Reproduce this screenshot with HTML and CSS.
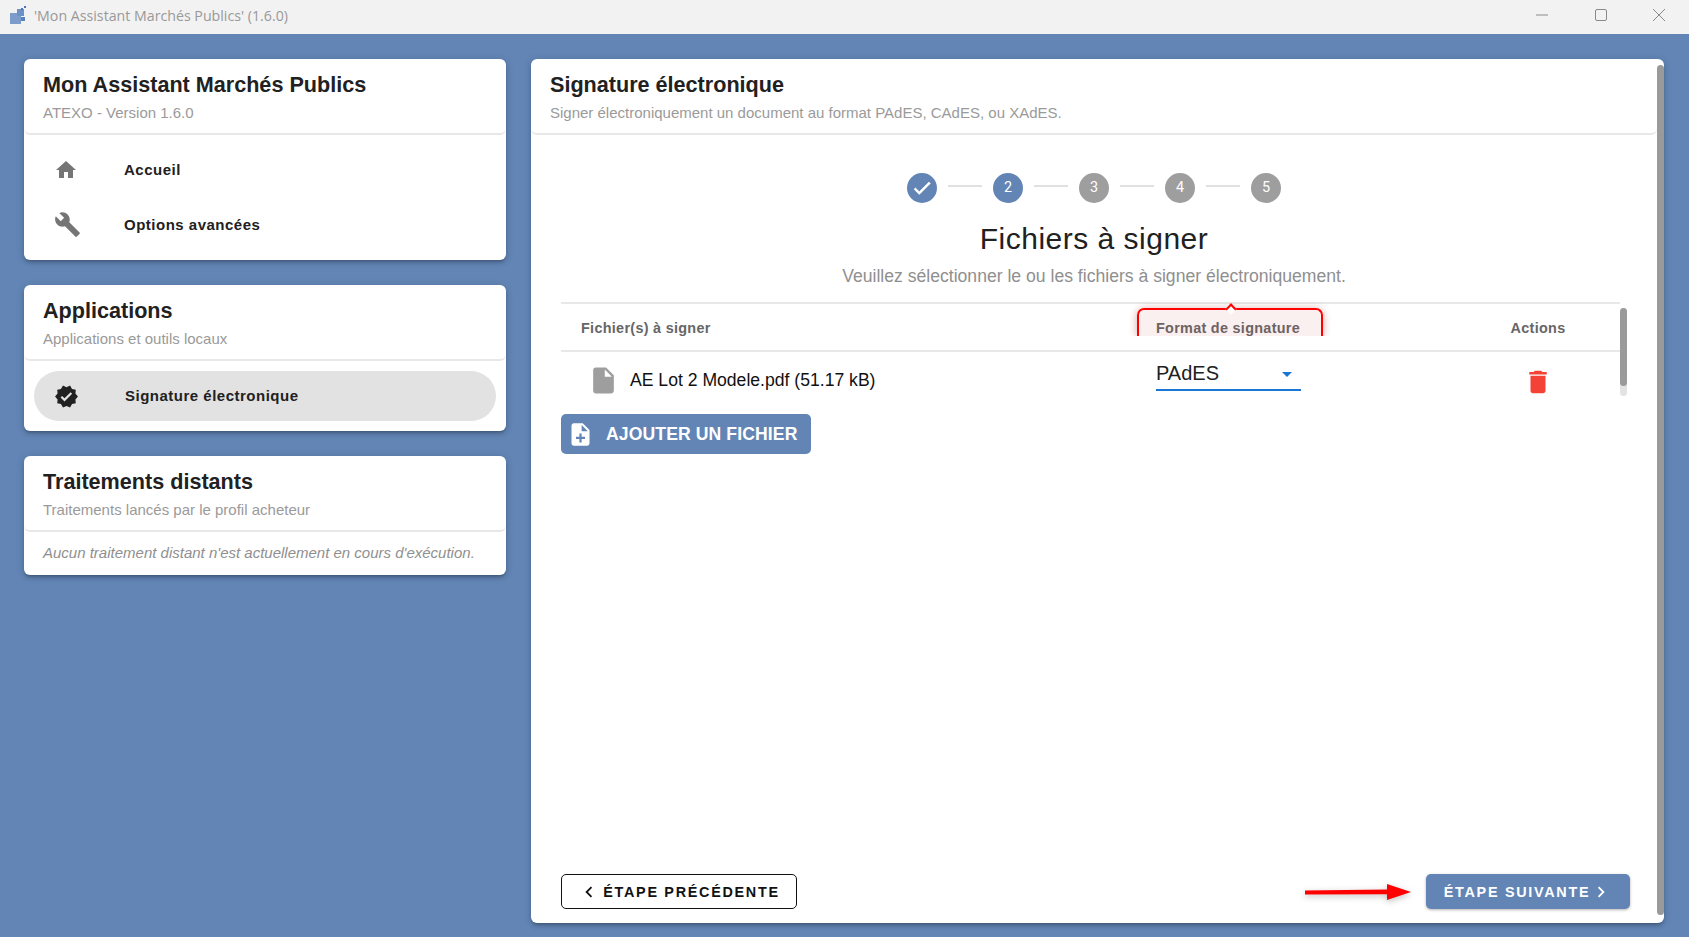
FILE: index.html
```html
<!DOCTYPE html>
<html lang="fr">
<head>
<meta charset="utf-8">
<title>Mon Assistant Marchés Publics</title>
<link rel="stylesheet" href="styles.css">
</head>
<body>
<div class="app">
  <header class="titlebar">
    <svg class="app-logo" viewBox="0 0 17 18"><rect x="0" y="7" width="11" height="11" fill="#7c9cca"/><rect x="7" y="3" width="7" height="7" fill="#6c91c6"/><rect x="11" y="11" width="4" height="4" fill="#5a82bd"/><rect x="11" y="2" width="2" height="2" fill="#4a74b5"/><rect x="14" y="0" width="2" height="2" fill="#4a74b5"/></svg>
    <span class="titlebar-text">'Mon Assistant Marchés Publics' (1.6.0)</span>
    <div class="win-controls">
      <svg class="win-btn" viewBox="0 0 14 14"><path d="M1 7h12" stroke="#8a8a8a" fill="none"/></svg>
      <svg class="win-btn" viewBox="0 0 14 14"><rect x="1.5" y="1.5" width="11" height="11" rx="1.5" stroke="#8a8a8a" fill="none"/></svg>
      <svg class="win-btn" viewBox="0 0 14 14"><path d="M1 1l12 12M13 1L1 13" stroke="#8a8a8a" fill="none"/></svg>
    </div>
  </header>
  <div class="workspace">
    <aside class="sidebar">
      <section class="card">
        <div class="card-head">
          <h2 class="card-title">Mon Assistant Marchés Publics</h2>
          <p class="card-sub">ATEXO - Version 1.6.0</p>
        </div>
        <nav class="nav">
          <a class="nav-item"><span class="nav-icon"><svg class="i24 grey" viewBox="0 0 24 24"><path d="M10 20v-6h4v6h5v-8h3L12 3 2 12h3v8z"/></svg></span><span class="nav-label">Accueil</span></a>
          <a class="nav-item"><span class="nav-icon"><svg class="i27 grey" viewBox="0 0 24 24"><path d="M22.7 19l-9.1-9.1c.9-2.3.4-5-1.5-6.9-2-2-5-2.4-7.4-1.3L9 6 6 9 1.6 4.7C.4 7.1.9 10.1 2.9 12.1c1.9 1.9 4.6 2.4 6.9 1.5l9.1 9.1c.4.4 1 .4 1.4 0l2.3-2.3c.5-.4.5-1.1.1-1.4z"/></svg></span><span class="nav-label">Options avancées</span></a>
        </nav>
      </section>
      <section class="card">
        <div class="card-head">
          <h2 class="card-title">Applications</h2>
          <p class="card-sub">Applications et outils locaux</p>
        </div>
        <div class="app-list">
          <a class="pill"><span class="nav-icon"><svg class="i25 dark" viewBox="0 0 24 24"><path d="M23 12l-2.44-2.78.34-3.68-3.61-.82-1.89-3.18L12 3 8.6 1.54 6.71 4.72l-3.61.81.34 3.68L1 12l2.44 2.78-.34 3.69 3.61.82 1.89 3.18L12 21l3.4 1.46 1.89-3.18 3.61-.82-.34-3.68L23 12zm-12.91 4.72l-3.8-3.81 1.48-1.48 2.32 2.33 5.85-5.87 1.48 1.48-7.33 7.35z"/></svg></span><span class="nav-label pill-label">Signature électronique</span></a>
        </div>
      </section>
      <section class="card">
        <div class="card-head">
          <h2 class="card-title">Traitements distants</h2>
          <p class="card-sub">Traitements lancés par le profil acheteur</p>
        </div>
        <p class="empty">Aucun traitement distant n'est actuellement en cours d'exécution.</p>
      </section>
    </aside>
    <main class="panel">
      <div class="panel-body">
        <div class="card-head">
          <h2 class="card-title">Signature électronique</h2>
          <p class="card-sub">Signer électroniquement un document au format PAdES, CAdES, ou XAdES.</p>
        </div>
        <div class="wizard">
          <ol class="stepper">
            <li class="step done"><svg class="i22 white check" viewBox="0 0 24 24"><path d="M9 16.17L4.83 12l-1.42 1.41L9 19 21 7l-1.41-1.41z"/></svg></li>
            <li class="connector"></li>
            <li class="step active">2</li>
            <li class="connector"></li>
            <li class="step">3</li>
            <li class="connector"></li>
            <li class="step">4</li>
            <li class="connector"></li>
            <li class="step">5</li>
          </ol>
          <h1 class="step-title">Fichiers à signer</h1>
          <p class="step-sub">Veuillez sélectionner le ou les fichiers à signer électroniquement.</p>
          <div class="table-wrap">
            <div class="table">
              <div class="t-row t-head">
                <div class="t-name">Fichier(s) à signer</div>
                <div class="t-format"><span class="callout"></span>Format de signature</div>
                <div class="t-actions">Actions</div>
              </div>
              <div class="t-row t-file">
                <div class="t-name file-cell"><svg class="file-icon" viewBox="0 0 24 24"><path d="M6 2c-1.1 0-1.99.9-1.99 2L4 20c0 1.1.89 2 1.99 2H18c1.1 0 2-.9 2-2V8l-6-6H6zm7 7V3.5L18.5 9H13z"/></svg><span>AE Lot 2 Modele.pdf (51.17 kB)</span></div>
                <div class="t-format"><div class="select"><span>PAdES</span><span class="select-caret"></span></div></div>
                <div class="t-actions"><svg class="trash" viewBox="0 0 24 24"><path d="M6 19c0 1.1.9 2 2 2h8c1.1 0 2-.9 2-2V7H6v12zM19 4h-3.5l-1-1h-5l-1 1H5v2h14V4z"/></svg></div>
              </div>
              <button class="btn-add"><svg class="i27 white" viewBox="0 0 24 24"><path d="M14 2H6c-1.1 0-1.99.9-1.99 2L4 20c0 1.1.89 2 1.99 2H18c1.1 0 2-.9 2-2V8l-6-6zm2 14h-3v3h-2v-3H8v-2h3v-3h2v3h3v2zm-3-7V3.5L18.5 9H13z"/></svg>AJOUTER UN FICHIER</button>
            </div>
            <div class="mini-scroll"><div class="mini-thumb"></div></div>
          </div>
          <footer class="wizard-foot">
            <button class="btn-prev"><svg class="i22 black" viewBox="0 0 24 24"><path d="M15.41 7.41L14 6l-6 6 6 6 1.41-1.41L10.83 12z"/></svg>ÉTAPE PRÉCÉDENTE</button>
            <div class="next-group">
              <svg class="arrow" viewBox="0 0 108 20"><path d="M1 8.4L83 7.6V2L107 10 83 18V12.2L1 12.4z" fill="#f00"/></svg>
              <button class="btn-next">ÉTAPE SUIVANTE<svg class="i22 white" viewBox="0 0 24 24"><path d="M10 6L8.59 7.41 13.17 12l-4.58 4.59L10 18l6-6z"/></svg></button>
            </div>
          </footer>
        </div>
      </div>
      <div class="panel-scroll"></div>
    </main>
  </div>
</div>
</body>
</html>
```

FILE: styles.css
```css
* { box-sizing: border-box; }
html, body { margin: 0; height: 100%; overflow: hidden; }
body { font-family: "Liberation Sans", Arial, sans-serif; color: #212121; }
h1, h2, p, ol { margin: 0; padding: 0; }
li { list-style: none; }
button { font-family: inherit; cursor: pointer; }

.app { display: flex; flex-direction: column; height: 937px; background: #6285b5; }

.titlebar { height: 34px; flex: none; display: flex; align-items: center; background: #f2f2f2; padding: 0 0 4px 10px; }
.app-logo { width: 17px; height: 18px; margin-right: 7px; }
.titlebar-text { font-family: "Open Sans", sans-serif; font-size: 14.2px; color: #999; }
.win-controls { margin-left: auto; display: flex; gap: 44.5px; padding-right: 23px; }
.win-btn { width: 14px; height: 14px; }

.workspace { flex: 1; min-height: 0; display: flex; gap: 25px; padding: 25px 25px 14px 24px; }

.sidebar { width: 482px; flex: none; display: flex; flex-direction: column; gap: 25px; }
.card, .panel { background: #fff; border-radius: 6px; box-shadow: 0 3px 3px -2px rgba(0,0,0,.2), 0 3px 4px rgba(0,0,0,.14), 0 1px 8px rgba(0,0,0,.12); }

.card-head { height: 76px; padding: 13px 19px 0; border-bottom: 2px solid #e8e8e8; border-radius: 0 0 6px 6px; }
.card-title { font-size: 21.6px; line-height: 26px; font-weight: 700; color: #212121; }
.card-sub { font-size: 15px; line-height: 18px; margin-top: 6px; color: #9a9a9a; }

.nav { padding: 7px 0 8px; }
.nav-item, .pill { display: flex; align-items: center; color: #212121; }
.nav-item { height: 55px; padding-left: 10px; }
.nav-icon { width: 80px; padding-left: 20px; flex: none; display: flex; align-items: center; }
.nav-label { font-size: 15px; font-weight: 700; letter-spacing: .5px; padding-left: 10px; }
.pill-label { padding: 0 0 2px 11px; }

.app-list { padding: 10px; }
.pill { height: 50px; border-radius: 25px; background: #e2e2e2; }

.empty { font-size: 15px; font-style: italic; color: #8f8f8f; line-height: 41px; padding: 0 0 2px 19px; }

.i22 { width: 22px; height: 22px; }
.i24 { width: 24px; height: 24px; }
.i25 { width: 25px; height: 25px; }
.i27 { width: 27px; height: 27px; flex: none; }
.grey { fill: #757575; }
.dark { fill: #212121; }
.white { fill: #fff; }
.black { fill: #111; }
.check { stroke: #fff; stroke-width: .8px; }

.panel { flex: 1; min-width: 0; display: flex; }
.panel-body { flex: 1; min-width: 0; display: flex; flex-direction: column; }
.panel-scroll { width: 7px; flex: none; margin: 6px 0 8px; background: #9a9a9a; border-radius: 4px; }

.wizard { flex: 1; min-height: 0; display: flex; flex-direction: column; padding: 38px 27px 14px 30px; }

.stepper { display: flex; justify-content: center; align-items: center; padding-right: 3px; }
.step { width: 30px; height: 30px; border-radius: 50%; background: #9e9e9e; color: #fff; display: flex; align-items: center; justify-content: center; font-family: Roboto, sans-serif; font-size: 14.4px; padding-bottom: 2px; }
.step.done { padding-bottom: 0; }
.step.active, .step.done { background: #6285b5; }
.connector { width: 34px; height: 2px; margin: 0 11px 4px; background: #e0e0e0; }

.step-title { font-size: 30px; line-height: 36px; font-weight: 400; letter-spacing: .5px; text-align: center; margin-top: 18px; padding-right: 3px; }
.step-sub { font-size: 17.6px; line-height: 22px; color: #8f8f8f; text-align: center; margin-top: 8px; padding-right: 3px; }

.table-wrap { display: flex; margin: 15px 3px 0 0; }
.table { flex: 1; min-width: 0; }
.mini-scroll { width: 7px; flex: none; height: 88px; margin-top: 6px; border-radius: 4px; background: #e3e3e3; }
.mini-thumb { height: 78px; background: #9a9a9a; border-radius: 4px; }

.t-row { display: grid; grid-template-columns: 576px 186px 1fr; align-items: center; }
.t-head { height: 50px; padding-top: 2px; border-top: 2px solid #e8e8e8; border-bottom: 2px solid #e8e8e8; font-size: 14.4px; font-weight: 700; letter-spacing: .3px; color: #666; }
.t-name { padding-left: 20px; }
.t-format { position: relative; padding-left: 19px; }
.t-actions { justify-self: end; width: 164px; text-align: center; }

.callout { position: absolute; left: 0; top: -12px; width: 186px; height: 28px; border: 2px solid #f00; border-bottom: 0; border-radius: 7px 7px 0 0; background: rgba(200,60,60,.08); box-shadow: 0 1px 8px rgba(150,0,0,.35); clip-path: inset(-8px -8px 0 -8px); }
.callout::before { content: ""; position: absolute; left: 88px; top: -5px; width: 6px; height: 6px; background: #fff; border-top: 2px solid #f00; border-left: 2px solid #f00; transform: rotate(45deg); }

.t-file { height: 60px; padding-bottom: 4px; font-size: 17.6px; color: #111; }
.file-cell { display: flex; align-items: center; padding-left: 27px; }
.file-icon { width: 31px; height: 31px; fill: #9e9e9e; margin-right: 11px; flex: none; }
.select { width: 145px; height: 34px; margin-top: -13px; border-bottom: 2px solid #1976d2; display: flex; align-items: center; justify-content: space-between; font-size: 20px; line-height: 24px; color: #212121; padding-right: 9px; }
.select-caret { width: 0; height: 0; border-left: 5px solid transparent; border-right: 5px solid transparent; border-top: 5px solid #1976d2; margin-top: 4px; }
.trash { width: 30px; height: 30px; fill: #f44336; display: block; margin: 4px auto 0; }

.btn-add { display: flex; align-items: center; gap: 12px; height: 40px; width: 250px; margin-top: 2px; padding: 0 0 0 6px; border: 0; border-radius: 5px; background: #6285b5; color: #fff; font-size: 17.6px; letter-spacing: .1px; font-weight: 700; }

.wizard-foot { margin-top: auto; display: flex; justify-content: space-between; align-items: center; }
.btn-prev, .btn-next { display: flex; align-items: center; height: 35px; border-radius: 5px; font-size: 14.4px; font-weight: 700; letter-spacing: 1.7px; }
.btn-prev { width: 236px; justify-content: center; gap: 3px; background: #fff; border: 1.5px solid #111; color: #111; }
.btn-next { width: 204px; justify-content: center; background: #6285b5; border: 0; color: #fff; box-shadow: 0 1px 3px rgba(0,0,0,.3); }
.next-group { display: flex; align-items: center; gap: 14px; }
.arrow { width: 108px; height: 20px; filter: drop-shadow(0 2px 3px rgba(0,0,0,.25)); }
```
